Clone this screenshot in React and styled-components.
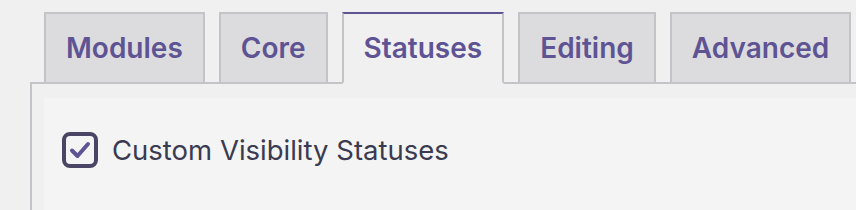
import React, { useState } from "react";
import styled, { createGlobalStyle } from "styled-components";

const Global = createGlobalStyle`
  html, body {
    margin: 0;
    padding: 0;
    background: #f0f0f1;
    font-family: Inter, "Noto Sans", "Liberation Sans", sans-serif;
    overflow: hidden;
  }
`;

const tabs = ["Modules", "Core", "Statuses", "Editing", "Advanced"];

const Page = styled.div`
  padding: 12px 0 0 30px;
  height: 210px;
  box-sizing: border-box;
  overflow: hidden;
  display: flex;
  flex-direction: column;
`;

const TabBar = styled.nav`
  display: flex;
  align-items: flex-end;
  padding-left: 14px;
  gap: 14px;
  position: relative;
  z-index: 1;
`;

const Tab = styled.button`
  font-family: inherit;
  font-size: 28px;
  font-weight: 600;
  line-height: 48px;
  padding: 10px 20px;
  margin: 0 0 -2px;
  border: 2px solid #c3c4c7;
  border-bottom-color: ${({ $active }) => ($active ? "#f0f0f1" : "#c3c4c7")};
  border-top-color: ${({ $active }) => ($active ? "#5e5494" : "#c3c4c7")};
  background: ${({ $active }) => ($active ? "#f0f0f1" : "#dcdcde")};
  color: #5e5494;
  cursor: pointer;
  white-space: nowrap;
`;

const Panel = styled.section`
  flex: 1;
  border-top: 2px solid #c3c4c7;
  border-left: 2px solid #c3c4c7;
  padding: 14px 0 0 12px;
  display: flex;
`;

const Inner = styled.div`
  flex: 1;
  background: #f4f4f4;
  padding: 34px 0 0 18px;
`;

const Row = styled.label`
  display: flex;
  align-items: center;
  gap: 14px;
  cursor: pointer;
  font-size: 27.5px;
  color: #3a3a50;
`;

const Box = styled.span`
  width: 36px;
  height: 36px;
  flex: none;
  box-sizing: border-box;
  border: 4px solid #4a4565;
  border-radius: 8px;
  display: inline-flex;
  align-items: center;
  justify-content: center;
  background: #f4f4f4;
`;

export default function App() {
  const [active, setActive] = useState("Statuses");
  const [checked, setChecked] = useState(true);
  return (
    <>
      <Global />
      <Page>
        <TabBar>
          {tabs.map((t) => (
            <Tab key={t} $active={t === active} onClick={() => setActive(t)}>
              {t}
            </Tab>
          ))}
        </TabBar>
        <Panel>
          <Inner>
            <Row onClick={() => setChecked(!checked)}>
              <Box>
                {checked && (
                  <svg width="22" height="18" viewBox="0 0 22 18">
                    <path
                      d="M3 9.5 L8.5 15 L19 3"
                      fill="none"
                      stroke="#5e5494"
                      strokeWidth="4"
                      strokeLinecap="round"
                      strokeLinejoin="round"
                    />
                  </svg>
                )}
              </Box>
              Custom Visibility Statuses
            </Row>
          </Inner>
        </Panel>
      </Page>
    </>
  );
}
